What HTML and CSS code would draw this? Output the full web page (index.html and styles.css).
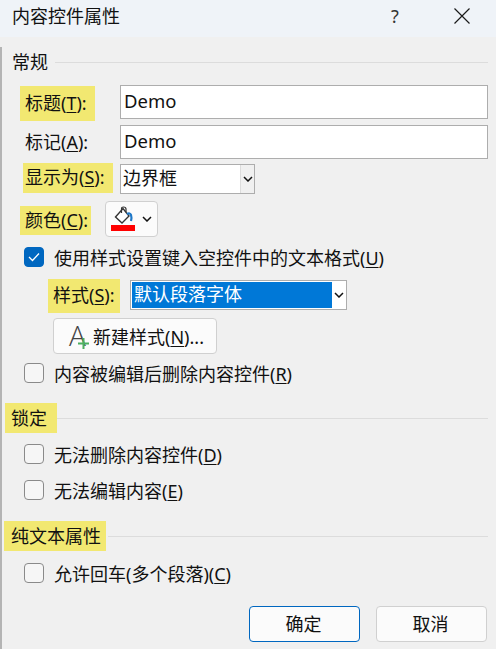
FILE: index.html
```html
<!DOCTYPE html>
<html lang="zh-CN">
<head>
  <meta charset="UTF-8" />
  <title>内容控件属性</title>
  <link rel="stylesheet" href="styles.css">
</head>
<body>
  <div class="dialog">
    <header class="titlebar">
      <div class="title">内容控件属性</div>
      <div class="help">?</div>
      <svg class="close" width="16" height="16" viewBox="0 0 16 16">
        <path d="M0.5 0.5L15.5 15.5M15.5 0.5L0.5 15.5" fill="none" stroke="#1a1a1a" stroke-width="1.2"/>
      </svg>
    </header>

    <main class="content">
      <div class="section-head head-general">
        <span class="head-text">常规</span>
        <span class="head-line"></span>
      </div>

      <div class="field field-title">
        <label class="mark mark-title">标题(<u>T</u>):</label>
        <input class="text-input" type="text" value="Demo">
      </div>

      <div class="field field-tag">
        <label class="plain-label">标记(<u>A</u>):</label>
        <input class="text-input" type="text" value="Demo">
      </div>

      <div class="field field-show">
        <label class="mark mark-show">显示为(<u>S</u>):</label>
        <div class="select select-show">
          <span class="select-value">边界框</span>
          <span class="select-arrow">
            <svg width="10" height="6" viewBox="0 0 10 6"><path d="M1 1L5 5L9 1" fill="none" stroke="#111" stroke-width="1.5"/></svg>
          </span>
        </div>
      </div>

      <div class="field field-color">
        <label class="mark mark-color">颜色(<u>C</u>):</label>
        <button class="color-btn">
          <svg width="31" height="26" viewBox="0 0 31 26">
            <path d="M4.500 12L12 3.500L18 11L11 18Z" fill="#fff" stroke="#333" stroke-width="1.4"/>
            <path d="M10.500 8V4Q10.500 2 12.500 2Q15 2 15 4V7" fill="none" stroke="#333" stroke-width="1.200"/>
            <path d="M16 9Q19 7.500 20 10Q21 13 20 16" fill="none" stroke="#1f78c8" stroke-width="2.200"/>
            <rect x="0" y="20" width="24" height="6" fill="#f00"/>
          </svg>
          <svg class="color-arrow" width="10" height="6" viewBox="0 0 10 6"><path d="M1 1L5 5L9 1" fill="none" stroke="#111" stroke-width="1.5"/></svg>
        </button>
      </div>

      <div class="check-row check-style">
        <span class="box box-on">
          <svg width="12" height="10" viewBox="0 0 12 10"><path d="M1 5L4.500 8.500L11 1.500" fill="none" stroke="#fff" stroke-width="1.300"/></svg>
        </span>
        <span>使用样式设置键入空控件中的文本格式(<u>U</u>)</span>
      </div>

      <div class="field field-style">
        <label class="mark mark-style">样式(<u>S</u>):</label>
        <div class="select select-style">
          <span class="select-value selected">默认段落字体</span>
          <span class="select-arrow">
            <svg width="10" height="6" viewBox="0 0 10 6"><path d="M1 1L5 5L9 1" fill="none" stroke="#111" stroke-width="1.5"/></svg>
          </span>
        </div>
      </div>

      <button class="new-style">
        <span class="big-a">A</span>
        <svg class="plus" width="11" height="11" viewBox="0 0 11 11"><path d="M5.500 0V11M0 5.500H11" stroke="#4caf60" stroke-width="2"/></svg>
        <span>新建样式(<u>N</u>)...</span>
      </button>

      <div class="check-row check-remove">
        <span class="box"></span>
        <span>内容被编辑后删除内容控件(<u>R</u>)</span>
      </div>

      <div class="section-head head-lock">
        <span class="head-text mark-head">锁定</span>
        <span class="head-line"></span>
      </div>

      <div class="check-row check-nodelete">
        <span class="box"></span>
        <span>无法删除内容控件(<u>D</u>)</span>
      </div>

      <div class="check-row check-noedit">
        <span class="box"></span>
        <span>无法编辑内容(<u>E</u>)</span>
      </div>

      <div class="section-head head-plain">
        <span class="head-text mark-head">纯文本属性</span>
        <span class="head-line"></span>
      </div>

      <div class="check-row check-return">
        <span class="box"></span>
        <span>允许回车(多个段落)(<u>C</u>)</span>
      </div>

      <div class="actions">
        <button class="action-btn action-ok">确定</button>
        <button class="action-btn">取消</button>
      </div>
    </main>
  </div>
</body>
</html>
```

FILE: styles.css
```css
* {
    box-sizing: border-box;
}

body {
    margin: 0;
    font-family: "Noto Sans", "Noto Sans CJK SC", sans-serif;
    font-size: 18px;
    color: #111;
    background-color: #f0f0f0;
}

u {
    text-underline-offset: 2px;
    text-decoration-thickness: 1px;
}

.dialog {
    width: 496px;
    height: 649px;
    overflow: hidden;
}

.titlebar {
    display: flex;
    align-items: center;
    height: 37px;
    padding: 0 0 6px 12px;
    background-color: #eff3f8;
}

.title {
    flex: 1;
    line-height: 30px;
}

.help {
    color: #333;
    width: 63px;
}

.close {
    margin-right: 26px;
}

.content {
    height: 612px;
    padding-right: 8px;
    border-left: 2px solid #b4b4b4;
    border-bottom-left-radius: 8px;
}

/* section headings */
.section-head {
    display: flex;
    align-items: center;
    height: 30px;
    line-height: 30px;
}

.head-text {
    padding-left: 10px;
    padding-right: 7px;
}

.mark-head {
    background-color: #f2e871;
    margin-left: 3px;
    padding: 0 10px 0 6px;
}

.head-line {
    flex: 1;
    height: 1px;
    background-color: #dcdcdc;
}

.head-general {
    margin-top: 10px;
}

.head-lock {
    margin-top: 20px;
}

.head-plain {
    margin-top: 21px;
}

.head-plain .head-text {
    margin: 0 2px;
    padding: 0 5px 0 7px;
}

/* label + control rows */
.field {
    display: flex;
    align-items: flex-start;
    padding-left: 23px;
}

.mark {
    background-color: #f2e871;
    white-space: nowrap;
}

.plain-label {
    width: 95px;
    line-height: 34px;
}

.mark-title {
    width: 75px;
    height: 35px;
    line-height: 34px;
    margin: 1px 25px 0 -5px;
    padding-left: 5px;
}

.mark-show {
    width: 90px;
    height: 30px;
    line-height: 29px;
    margin: -1px 7px 0 -2px;
    padding-left: 2px;
}

.mark-color {
    width: 71px;
    height: 29px;
    line-height: 29px;
    margin: 5px 14px 0 -5px;
    padding-left: 5px;
}

.mark-style {
    width: 72px;
    height: 34px;
    line-height: 33px;
    margin: -1px 10px 0 23px;
    padding-left: 5px;
}

.field-title {
    margin-top: 8px;
}

.field-tag {
    margin-top: 4px;
}

.field-show {
    margin-top: 5px;
}

.field-color {
    margin-top: 7px;
}

.field-style {
    margin-top: 13px;
}

.text-input {
    width: 368px;
    height: 34px;
    padding: 0 4px 3px 3px;
    border: 1px solid #adadad;
    background-color: white;
    font-family: "Noto Sans", sans-serif;
    font-size: 18.500px;
    color: #111;
    outline: none;
}

.select {
    display: flex;
    background-color: white;
    border: 1px solid #adadad;
    height: 30px;
}

.select-show {
    width: 135px;
}

.select-style {
    width: 217px;
    padding: 1px 0 1px 1px;
}

.select-value {
    flex: 1;
    padding-left: 2px;
    line-height: 27px;
    white-space: nowrap;
}

.selected {
    background-color: #0078d7;
    color: white;
    line-height: 25px;
}

.select-arrow {
    display: flex;
    align-items: center;
    justify-content: center;
    width: 14px;
    height: 100%;
    background-color: #f0f0f0;
    border-left: 1px solid #dcdcdc;
}

.select-style .select-arrow {
    background-color: white;
    border-left: none;
}

.color-btn {
    display: flex;
    align-items: flex-start;
    width: 53px;
    height: 36px;
    padding: 3px 0 0 5px;
    background-color: #fbfbfb;
    border: 1px solid #d0d0d0;
    border-radius: 4px;
}

.color-arrow {
    margin-top: 11px;
}

/* checkboxes */
.check-row {
    display: flex;
    align-items: center;
    gap: 10px;
    height: 20px;
    padding-left: 22px;
    white-space: nowrap;
}

.box {
    display: flex;
    align-items: center;
    justify-content: center;
    width: 20px;
    height: 20px;
    background-color: #f6f6f6;
    border: 1px solid #8a8a8a;
    border-radius: 4px;
}

.box-on {
    background-color: #0067c0;
    border-color: #0067c0;
}

.check-style {
    margin-top: 10px;
}

.check-remove {
    margin-top: 9px;
}

.check-nodelete {
    margin-top: 11px;
}

.check-noedit {
    margin-top: 16px;
}

.check-return {
    margin-top: 12px;
}

/* buttons */
.new-style {
    position: relative;
    display: flex;
    align-items: center;
    width: 164px;
    height: 36px;
    margin: 5px 0 0 51px;
    padding: 0 0 0 11px;
    background-color: #fbfbfb;
    border: 1px solid #d0d0d0;
    border-radius: 4px;
    font: inherit;
    color: #111;
}

.big-a {
    flex: none;
    width: 31px;
    margin-left: -3px;
    padding-bottom: 3px;
    font-family: "Open Sans", sans-serif;
    font-size: 28px;
    font-weight: 300;
    line-height: 30px;
    color: #444;
}

.plus {
    position: absolute;
    left: 24px;
    top: 19px;
}

.actions {
    display: flex;
    justify-content: flex-end;
    gap: 16px;
    margin-top: 23px;
    padding-right: 1px;
}

.action-btn {
    width: 111px;
    height: 36px;
    padding: 0 2px 3px 0;
    background-color: #fbfbfb;
    border: 1px solid #d0d0d0;
    border-radius: 4px;
    font: inherit;
    color: #111;
}

.action-ok {
    border-color: #0067c0;
}
```
